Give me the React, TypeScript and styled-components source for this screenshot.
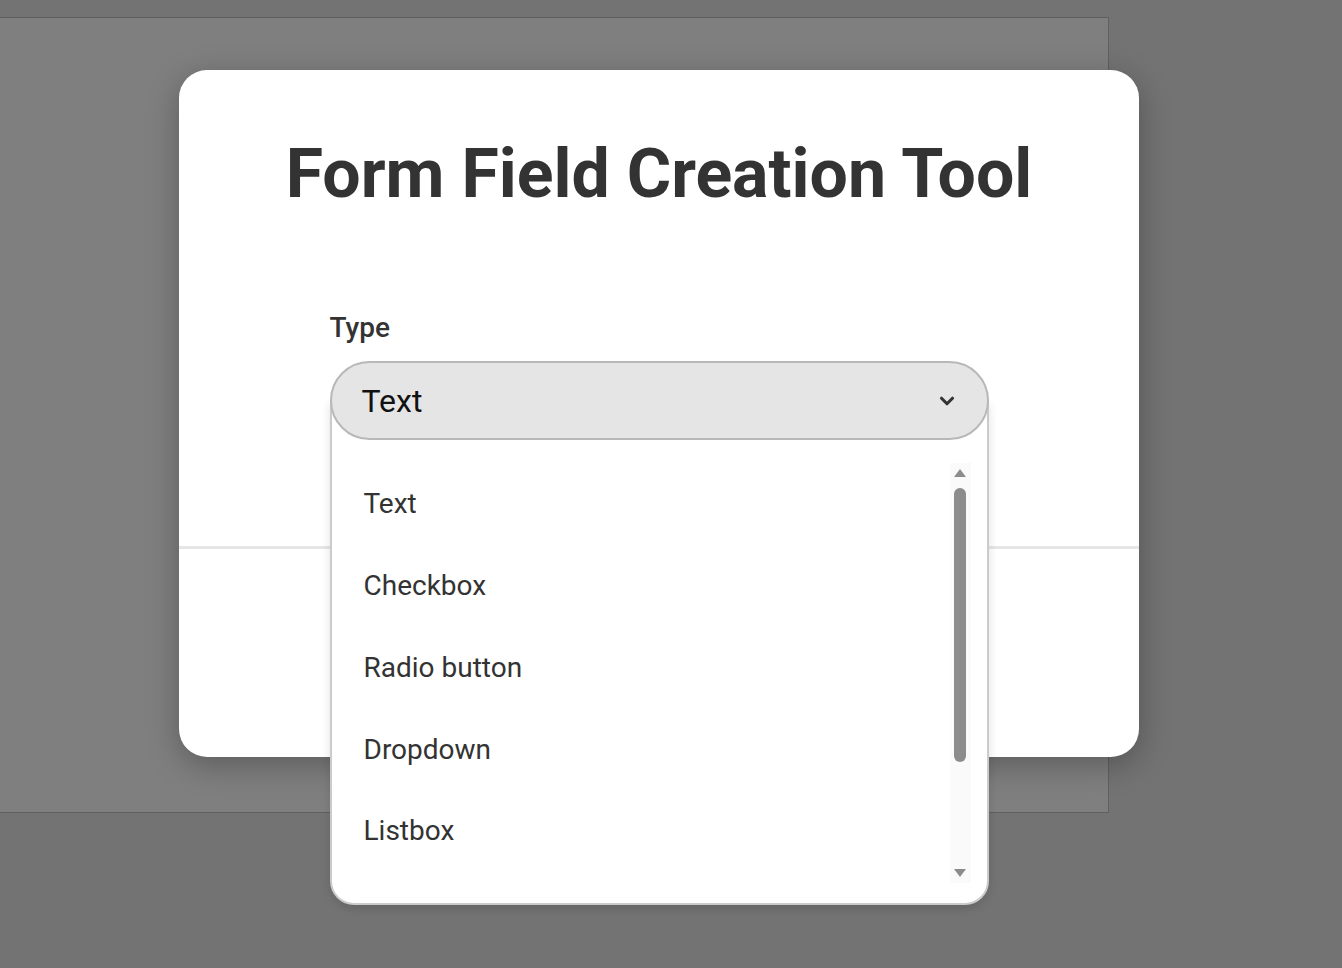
import React from "react";
import styled, { createGlobalStyle } from "styled-components";
import { ChevronDown } from "lucide-react";

const fieldTypes = ["Text", "Checkbox", "Radio button", "Dropdown", "Listbox"];

const GlobalStyle = createGlobalStyle`
  html, body {
    margin: 0;
    padding: 0;
    background: #737373;
    font-family: Roboto, "Noto Sans", Arial, sans-serif;
  }
`;

const App = () => {
  const [selected] = React.useState("Text");

  return (
    <>
      <GlobalStyle />
      <S.Screen>
        <S.Page>
          <S.Modal>
            <S.Body>
              <S.Title>Form Field Creation Tool</S.Title>
              <S.Field>
                <S.Label>Type</S.Label>
                <S.SelectWrap>
                  <S.Select>
                    <span>{selected}</span>
                    <ChevronDown size={22} strokeWidth={3.4} color="#333" />
                  </S.Select>
                  <S.Menu>
                    <S.MenuScroll>
                      <S.Options>
                        {fieldTypes.map((t) => (
                          <S.Option key={t}>{t}</S.Option>
                        ))}
                      </S.Options>
                      <S.Track>
                        <S.ArrowUp />
                        <S.Thumb />
                        <S.ArrowDown />
                      </S.Track>
                    </S.MenuScroll>
                  </S.Menu>
                </S.SelectWrap>
              </S.Field>
            </S.Body>
            <S.Footer />
          </S.Modal>
        </S.Page>
      </S.Screen>
    </>
  );
};

export default App;

const S = {
  Screen: styled.div`
    width: 1342px;
    height: 968px;
    padding-top: 17px;
    box-sizing: border-box;
    overflow: hidden;
  `,
  Page: styled.div`
    position: relative;
    width: 1109px;
    height: 796px;
    box-sizing: border-box;
    background: #7f7f7f;
    border: 1px solid #606060;
    border-left: none;
  `,
  Modal: styled.div`
    position: absolute;
    left: 179px;
    top: 52px;
    width: 960px;
    height: 687px;
    display: flex;
    flex-direction: column;
    background: #ffffff;
    border-radius: 28px;
    box-shadow: 0 8px 32px rgba(0, 0, 0, 0.28);
  `,
  Body: styled.div`
    display: flex;
    flex-direction: column;
    align-items: center;
    padding: 64px 0 106px;
    border-bottom: 3px solid #e6e6e6;
  `,
  Title: styled.h1`
    margin: 0;
    font-size: 68px;
    line-height: 80px;
    font-weight: 700;
    color: #333333;
  `,
  Field: styled.div`
    width: 659px;
    margin-top: 99px;
    display: flex;
    flex-direction: column;
    gap: 18px;
  `,
  Label: styled.label`
    font-size: 28px;
    line-height: 30px;
    font-weight: 500;
    color: #333333;
  `,
  SelectWrap: styled.div`
    position: relative;
  `,
  Select: styled.div`
    position: relative;
    z-index: 2;
    height: 79px;
    box-sizing: border-box;
    display: flex;
    align-items: center;
    justify-content: space-between;
    padding: 0 29px 0 30px;
    background: #e5e5e5;
    border: 2px solid #b8b8b8;
    border-radius: 40px;
    font-size: 32px;
    color: #111111;
  `,
  Menu: styled.div`
    position: absolute;
    z-index: 1;
    left: 0;
    right: 0;
    top: 39px;
    height: 505px;
    box-sizing: border-box;
    padding: 63px 16px 21px 16px;
    background: #ffffff;
    border: 2px solid #cbcbcb;
    border-top: none;
    border-radius: 0 0 24px 24px;
    box-shadow: 0 4px 10px rgba(0, 0, 0, 0.12);
  `,
  MenuScroll: styled.div`
    display: flex;
    height: 420px;
  `,
  Options: styled.ul`
    flex: 1;
    margin: 0;
    padding: 0;
    list-style: none;
  `,
  Option: styled.li`
    height: 81.75px;
    display: flex;
    align-items: center;
    padding-left: 16px;
    font-size: 28px;
    color: #333333;
  `,
  Track: styled.div`
    width: 21px;
    display: flex;
    flex-direction: column;
    align-items: center;
    background: #fafafa;
    padding: 6px 0 6px;
    box-sizing: border-box;
  `,
  ArrowUp: styled.div`
    width: 0;
    height: 0;
    border-left: 6px solid transparent;
    border-right: 6px solid transparent;
    border-bottom: 8px solid #8c8c8c;
  `,
  Thumb: styled.div`
    width: 12px;
    height: 274px;
    margin-top: 11px;
    border-radius: 6px;
    background: #8c8c8c;
  `,
  ArrowDown: styled.div`
    width: 0;
    height: 0;
    margin-top: auto;
    border-left: 6px solid transparent;
    border-right: 6px solid transparent;
    border-top: 8px solid #8c8c8c;
  `,
  Footer: styled.div`
    flex: 1;
  `,
};
